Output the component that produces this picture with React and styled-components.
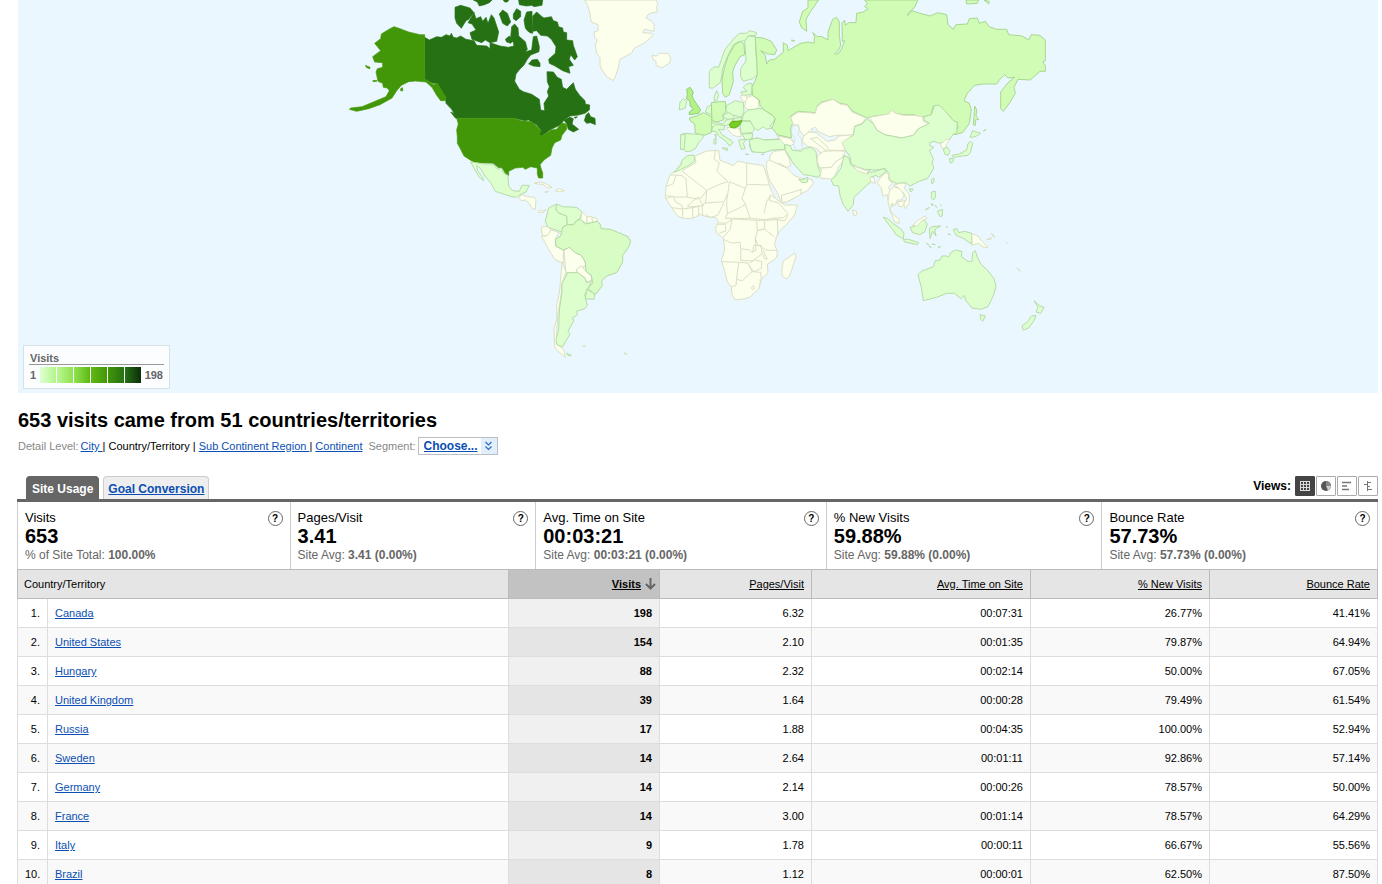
import React from 'react';
import styled, { createGlobalStyle } from 'styled-components';

const Global = createGlobalStyle`
  * { box-sizing: border-box; }
  body { margin: 0; background: #fff; color: #000; font-family: "Liberation Sans", Arial, sans-serif; font-size: 11px; }
`;

const Page = styled.main`
  padding: 0 4px 0 17px;
`;
const MapPanel = styled.section`
  position: relative;
  margin-left: 1px;
  height: 393px;
  background: #eaf7fe;
  overflow: hidden;
`;
const MapSvg = styled.svg`
  display: block;
  width: 100%;
  height: 100%;
`;
const Legend = styled.div`
  position: absolute;
  left: 5px;
  bottom: 4px;
  width: 147px;
  height: 44px;
  padding: 6px 5px 0;
  border: 1px solid #d8e1e4;
  background: #fbfdff;
  color: #666;
  font-weight: bold;
`;
const LegendTitle = styled.div`
  height: 13px;
  padding-left: 1px;
  line-height: 13px;
  border-bottom: 1px solid #999;
`;
const LegendScale = styled.div`
  display: flex;
  align-items: center;
  justify-content: space-between;
  height: 20px;
  padding: 0 1px;
`;
const Ramp = styled.div`
  display: flex;
  gap: 1px;
`;
const Step = styled.span`
  width: 16px;
  height: 16px;
  background: linear-gradient(to right, ${p => p.$from}, ${p => p.$to});
`;

const Title = styled.h1`
  margin: 15px 0 0 1px;
  font-size: 20px;
  line-height: 24px;
`;
const DetailBar = styled.div`
  display: flex;
  align-items: center;
  height: 20px;
  margin: 4px 0 0 1px;
  color: #888;
`;
const Levels = styled.nav`
  margin: 0 6px 0 2px;
  color: #000;
`;
const Link = styled.a`
  color: #0b4fb3;
  text-decoration: underline;
`;
const SegmentBox = styled.span`
  position: relative;
  display: flex;
  margin-left: 2px;
  border: 1px solid #b9bfc4;
  width: 80px;
  height: 18px;
  background: linear-gradient(to right, #fff 62px, #e2effa 62px);
`;
const SegmentSelect = styled.select`
  appearance: none;
  width: 100%;
  padding: 0 0 0 5px;
  border: 0;
  background: transparent;
  color: #0b4fb3;
  font: bold 12px "Liberation Sans", Arial, sans-serif;
  text-decoration: underline;
`;
const SegmentArrow = styled.svg`
  position: absolute;
  right: 4px;
  top: 3px;
  pointer-events: none;
`;

const TabBar = styled.div`
  display: flex;
  align-items: flex-end;
  justify-content: space-between;
  height: 46px;
  border-bottom: 3px solid #666;
`;
const Tabs = styled.div`
  display: flex;
  gap: 4px;
  padding-left: 9px;
`;
const Tab = styled.button`
  height: 23px;
  padding: 2px ${p => (p.$active ? 5 : 4)}px 0;
  border: 1px solid ${p => (p.$active ? '#666' : '#ccc')};
  border-bottom: 0;
  border-radius: 4px 4px 0 0;
  background: ${p => (p.$active ? '#666' : '#eee')};
  color: ${p => (p.$active ? '#fff' : '#0b4fb3')};
  font: bold 12px "Liberation Sans", Arial, sans-serif;
  text-decoration: ${p => (p.$active ? 'none' : 'underline')};
`;
const Views = styled.div`
  display: flex;
  align-items: center;
  gap: 1px;
  height: 20px;
  margin-bottom: 3px;
  font-size: 12px;
  font-weight: bold;
`;
const ViewsLabel = styled.span`
  margin-right: 3px;
`;
const ViewButton = styled.button`
  display: grid;
  place-items: center;
  width: 20px;
  height: 20px;
  padding: 0;
  border: 1px solid ${p => (p.$active ? '#444' : '#aaa')};
  border-radius: 1px;
  background: ${p => (p.$active ? '#444' : '#fff')};
`;

const Summary = styled.section`
  display: grid;
  grid-template-columns: 272fr 246fr 291fr 276fr 276fr;
  border: solid #ccc;
  border-width: 0 1px 0 1px;
`;
const Metric = styled.div`
  position: relative;
  height: 67px;
  padding: 7px 7px 0;
  color: #666;
  font-size: 12px;
  line-height: 20px;
  & + & { border-left: 1px solid #ccc; }
`;
const MetricName = styled.div`
  color: #000;
  font-size: 13px;
  line-height: 18px;
`;
const MetricValue = styled.div`
  color: #000;
  font-size: 20px;
  font-weight: bold;
  line-height: 18px;
`;
const Help = styled.button`
  position: absolute;
  top: 9px;
  right: 7px;
  width: 15px;
  height: 15px;
  padding: 0;
  border: 1px solid #666;
  border-radius: 50%;
  background: #fff;
  color: #000;
  font: bold 10px/13px "Liberation Sans", Arial, sans-serif;
`;

const Table = styled.table`
  width: 100%;
  table-layout: fixed;
  border-collapse: collapse;
  font-size: 11px;
`;
const Col = styled.col`
  width: ${p => p.$w};
`;
const Th = styled.th`
  height: 29px;
  padding: 0 7px;
  border: 1px solid #bbb;
  background: ${p => (p.$sorted ? '#c2c2c2' : '#e5e5e5')};
  font-weight: ${p => (p.$sorted ? 'bold' : 'normal')};
  text-align: ${p => (p.$left ? 'left' : 'right')};
  ${p => p.$left && 'padding-left: 6px;'}
  ${p => p.$sorted && 'padding-right: 3px;'}
`;
const SortButton = styled.button`
  display: inline-flex;
  align-items: center;
  gap: 4px;
  padding: 0;
  border: 0;
  background: none;
  color: #000;
  font: inherit;
  text-decoration: underline;
`;
const Row = styled.tr`
  background: ${p => (p.$even ? '#f9f9f9' : '#fff')};
`;
const Td = styled.td`
  height: 29px;
  padding: 0 7px;
  border: 1px solid #ddd;
  text-align: ${p => (p.$left ? 'left' : 'right')};
  ${p => p.$strong && `font-weight: bold; background: ${p.$even ? '#e5e5e5' : '#f0f0f0'};`}
`;

const FILLS = {
  none: ['#fbffeb', '#dcdfc6'],
  low: ['#dcffcd', '#b6dba8'],
  br: ['#d8fdc4', '#b2d8a0'],
  mid: ['#d0fcb6', '#a9d693'],
  uk: ['#b4f189', '#91cf6c'],
  hu: ['#78cf23', '#62b015'],
  us: ['#429708', '#429708'],
  ca: ['#267114', '#267114'],
};

// Each sheet is a patch of the map, digitised at three times its drawn size.
const SHEETS = [
  { at: [340, 0], shapes: [
    ['ca', '254,112 268,120 290,110 305,112 318,104 330,108 334,100 340,112 350,114 362,108 378,118 402,122 410,136 440,138 450,146 450,128 462,132 480,138 505,142 522,138 520,128 512,112 515,80 524,72 534,84 536,108 556,125 562,148 556,155 575,150 580,110 590,108 598,140 597,155 572,165 562,178 552,195 540,207 528,222 524,244 538,268 550,275 575,283 598,298 602,330 614,332 612,310 626,288 622,275 628,260 622,245 621,215 640,216 652,232 664,238 668,262 680,268 700,248 706,268 718,285 735,302 736,312 749,315 748,330 735,340 715,345 690,348 675,358 660,375 630,390 610,405 598,410 597,398 602,390 590,375 565,360 555,362 520,354 355,354 345,346 335,328 318,310 316,292 292,250 278,250 254,238'],
    ['ca', '672,360 690,352 700,356 696,372 716,388 700,396 685,388 680,372'],
    ['ca', '733,362 738,345 746,338 752,350 765,355 766,374 752,368 740,370'],
    ['ca', '345,22 362,16 390,24 402,38 386,58 378,62 364,85 350,70 345,54'],
    ['ca', '384,68 402,38 408,56 422,50 428,64 438,52 444,70 454,44 462,54 468,72 476,96 470,124 450,128 436,120 425,128 396,118 390,98 408,90 396,72'],
    ['ca', '478,42 488,30 502,40 512,66 502,78 488,70'],
    ['ca', '520,42 530,26 542,34 542,50 528,62 520,56'],
    ['ca', '496,118 508,108 519,122 512,130 500,126'],
    ['ca', '552,60 560,36 576,34 576,56 578,100 570,98 562,92 556,84'],
    ['ca', '578,48 590,36 606,50 612,54 634,50 640,62 652,66 656,80 668,84 670,96 680,98 680,120 698,122 700,136 712,170 704,180 692,164 688,178 700,196 686,200 690,220 668,212 645,198 628,190 626,178 646,160 648,140 634,118 622,108 602,106 590,92 578,94'],
    ['ca', '400,0 412,6 418,18 434,14 448,8 456,0'],
    ['ca', '536,0 538,14 560,18 576,16 582,20 606,16 608,0'],
    ['ca', '490,0 494,6 502,6 506,0'],
    ['ca', '566,192 576,180 592,178 600,190 600,200 580,198'],
    ['ca', '332,336 340,340 356,356 346,354'],
    ['ca', '702,352 712,350 708,355'],
    ['us', '254,104 254,238 264,242 280,254 292,250 308,276 318,292 314,302 302,302 290,286 276,262 258,246 226,243 206,245 184,256 170,272 156,294 120,314 86,326 50,334 28,328 32,324 66,320 100,306 138,290 148,272 142,264 130,262 128,250 114,244 108,216 112,206 128,202 128,188 104,186 98,170 122,152 104,130 122,116 124,102 150,86 162,80 180,86 206,96 240,104'],
    ['us', '76,196 90,202 90,206 80,203'], ['us', '98,242 110,241 110,244 100,245'], ['us', '182,266 188,263 188,273 182,272'],
    ['us', '350,355 520,355 544,362 560,364 576,366 592,380 602,392 598,408 616,402 634,390 650,388 664,370 672,370 680,374 680,388 666,406 662,420 644,428 636,444 632,466 612,480 600,494 604,508 608,518 608,534 596,534 592,522 592,504 572,500 556,508 548,502 526,504 506,514 506,526 496,520 488,506 474,502 460,490 408,488 394,482 372,468 360,444 352,430 352,410 350,390 355,372'],
  ] },
  { at: [440, 150], shapes: [
    ['low', '92,36 108,38 130,42 156,42 174,58 184,54 190,68 204,78 206,108 218,122 238,124 246,106 268,106 258,126 240,134 230,142 214,140 166,124 152,98 134,78 122,56 110,46 112,60 126,80 132,92 118,82 106,62'],
    ['none', '236,142 246,134 262,140 284,142 288,148 286,178 276,176 268,160 256,150 244,152'],
    ['none', '294,184 302,180 308,184 318,178 312,186 298,188'],
    ['none', '282,100 296,96 316,100 336,112 324,114 310,104'], ['none', '346,122 356,116 374,122 360,126'], ['none', '314,126 326,124 322,128'],
    ['low', '316,214 326,174 350,162 348,180 358,190 380,198 382,224 368,232 368,248 354,242 324,232'],
    ['low', '350,162 368,170 410,172 426,186 420,206 410,212 400,224 382,224 380,198 354,188 348,176'],
    ['none', '426,186 440,198 442,222 422,210'], ['none', '440,200 456,200 458,218 442,220'], ['none', '456,202 470,204 472,214 458,218'],
    ['none', '306,230 322,230 334,240 320,258 308,256 304,244'],
    ['none', '304,258 320,258 334,240 358,248 346,266 346,288 370,300 370,340 344,328 324,294'],
    ['none', '372,300 388,292 406,308 424,316 436,336 436,348 410,358 408,368 378,370'],
    ['none', '410,358 424,348 436,362 454,378 454,394 440,396 434,382 412,368'],
    ['none', '366,338 378,366 364,406 364,430 354,490 350,540 350,580 372,600 376,622 350,600 344,590 342,536 350,508 350,464 358,430'],
    ['low', '382,368 414,368 434,384 440,398 454,392 450,404 434,434 442,466 434,476 410,484 412,494 396,506 402,510 384,544 390,552 368,590 350,584 348,568 356,540 358,480 366,424 366,400 378,380'],
    ['br', '368,232 382,224 400,224 410,212 422,208 436,222 472,214 480,222 484,236 512,238 536,248 564,260 572,274 566,292 548,316 548,336 530,368 500,378 486,392 486,408 466,434 444,416 458,398 454,376 438,364 436,336 424,316 406,308 388,292 370,300 348,288 346,268 362,258'],
    ['low', '440,418 464,432 462,448 436,446'],
    ['low', '380,610 394,616 386,618'], ['none', '428,588 438,588 432,590'], ['none', '552,608 562,612 556,614'],
  ] },
  { at: [570, 0], shapes: [
    ['none', '44,0 54,18 60,44 64,66 84,74 84,92 72,96 74,112 82,120 76,136 80,160 90,172 90,196 96,210 110,230 130,242 136,230 144,206 150,178 184,160 194,144 222,130 250,106 246,100 218,98 224,88 252,94 252,72 240,60 228,54 234,44 246,38 262,36 260,20 264,14 258,0'],
    ['none', '246,166 260,168 268,160 294,160 302,174 300,188 276,204 258,196 258,184 250,178'],
    ['low', '418,264 418,214 432,200 446,202 464,150 490,118 508,100 528,100 540,92 560,98 556,108 540,106 524,122 504,126 490,134 472,170 458,206 452,246 430,264'],
    ['mid', '458,280 456,240 464,200 474,170 494,134 512,124 522,132 524,164 510,170 494,198 488,216 490,244 478,284 466,292'],
    ['low', '524,126 534,108 556,110 558,160 562,196 562,224 548,236 520,244 512,230 512,206 528,182 526,148'],
    ['low', '432,292 440,272 446,284 440,302 434,304'],
    ['low', '520,262 530,252 546,250 546,266 544,284 520,286 512,276 530,274'],
    ['none', '512,286 530,288 536,306 524,306 514,298'],
    ['none', '524,316 530,294 548,286 566,300 566,324 544,332 528,326'],
    ['uk', '350,268 360,262 370,276 366,288 372,300 384,318 392,330 386,340 358,344 358,336 370,326 360,318 360,304 350,296 352,284'],
    ['low', '328,330 330,306 340,296 350,302 346,324'],
    ['mid', '358,354 380,348 400,338 424,350 426,372 424,398 402,406 376,400 374,372 360,362'],
    ['low', '332,404 344,400 396,404 400,412 386,428 376,446 360,454 346,454 342,448 332,448'],
    ['low', '332,404 346,404 342,448 332,448'],
    ['low', '406,336 412,320 426,314 424,344'],
    ['mid', '424,308 440,306 466,304 468,336 458,344 460,360 442,366 426,362'],
    ['low', '470,316 496,302 520,308 522,336 514,352 484,344 468,334'],
    ['low', '460,346 476,338 494,348 484,358 464,356'],
    ['low', '424,370 440,368 458,372 468,360 488,356 486,368 470,376 448,378 426,382'],
    ['low', '426,384 436,374 464,376 462,390 446,388 456,404 484,422 490,428 478,438 468,424 446,408 438,394 426,394'],
    ['low', '490,356 514,352 512,364 494,364'],
    ['none', '470,382 494,384 508,384 514,410 502,410 488,404 474,390'],
    ['low', '514,364 540,364 552,380 552,392 546,398 514,400 510,380'],
    ['low', '516,402 548,400 546,416 526,420'],
    ['low', '506,420 528,418 520,430 526,446 514,448 510,436'],
    ['low', '520,344 534,330 564,326 578,326 614,350 614,360 600,378 606,384 590,388 580,380 562,392 550,380 540,362 516,362'],
    ['hu', '478,374 486,364 500,364 516,362 506,378 494,384 482,382'],
    ['low', '456,444 472,444 472,452'], ['low', '432,418 438,414 438,432 432,432'], ['low', '434,404 438,402 438,412'],
    ['low', '540,418 560,414 580,420 636,416 644,436 640,448 604,450 576,456 546,456 538,436'],
    ['none', '620,406 650,412 672,422 674,430 654,436 636,416'],
    ['mid', '664,120 674,122 668,124'], ['low', '526,462 536,464'], ['low', '574,464 582,462'],
  ] },
  { at: [740, 0], shapes: [
    ['mid', '200,94 184,82 178,66 188,34 204,24 204,0 236,0 212,34 198,58'],
    ['mid', '46,112 70,114 94,124 110,150 104,164 82,162 62,152 76,166 80,192 88,180 104,178 130,156 130,128 142,136 144,152 182,130 204,126 222,130 224,110 218,98 232,110 246,110 264,120 264,96 278,58 290,52 298,66 298,104 302,136 296,150 284,162 294,162 304,148 314,122 307,124 306,70 314,60 316,76 326,68 348,68 350,40 370,36 384,26 374,20 382,10 374,0 534,0 524,22 502,42 504,46 516,32 540,40 570,48 594,38 620,44 624,74 640,88 648,74 682,72 688,56 712,54 718,70 736,64 748,80 770,88 800,88 806,104 846,108 866,120 874,104 900,106 916,120 916,182 908,186 916,196 916,214 900,214 870,240 834,238 822,262 826,280 808,310 790,334 782,326 782,276 804,248 824,232 804,234 794,224 778,240 770,252 730,252 704,256 682,280 672,302 688,310 694,330 688,370 668,398 644,404 638,398 654,386 652,366 642,364 614,332 598,316 580,318 572,346 540,352 522,344 490,344 464,340 454,330 446,342 394,350 382,354 356,342 336,332 322,314 300,310 280,298 244,306 230,320 228,338 174,334 152,348 158,370 152,384 154,414 112,404 96,384 106,358 98,346 70,328 60,316 58,300 38,286 36,262 46,240 52,224 50,180'],
    ['mid', '678,0 680,12 712,10 716,0'], ['mid', '732,0 746,12 748,4'],
    ['none', '152,352 174,336 226,340 230,322 246,308 280,298 300,312 322,316 336,336 360,346 378,354 366,370 344,378 340,404 324,406 290,406 268,410 246,400 228,392 228,384 214,388 206,396 192,408 178,390 176,376 160,374'],
    ['none', '388,352 446,342 454,330 466,340 490,346 522,346 548,350 550,364 568,370 532,388 520,406 486,414 456,408 434,404 410,390 402,374'],
    ['low', '28,424 34,418 54,414 74,420 130,418 134,436 134,448 98,450 72,458 44,456 34,452'],
    ['none', '112,408 130,412 152,416 162,430 152,438 134,434'],
    ['mid', '704,318 710,330 708,348 716,358 706,360 706,376 700,374 702,346'],
    ['low', '690,412 698,392 722,400 706,410'], ['low', '730,392 738,388 732,394'],
    ['low', '636,466 658,462 680,450 684,430 692,424 698,430 692,456 684,466 666,468 642,472'],
    ['low', '628,480 630,474 640,480'],
  ] },
  { at: [740, 100], shapes: [
    ['low', '382,56 366,72 344,80 340,106 312,122 304,130 316,150 330,170 334,192 350,200 374,208 408,210 436,206 446,220 448,240 468,250 498,248 510,258 538,244 562,236 582,204 576,190 580,176 568,152 582,142 570,138 570,128 582,124 598,130 628,120 640,102 650,98 652,68 638,60 618,36 598,16 584,16 574,44 552,50 552,60 568,70 536,86 520,106 484,114 434,104 410,90 402,74'],
    ['none', '604,130 616,120 630,116 618,136 620,142 606,146 602,136'],
    ['low', '610,148 622,142 630,154 624,166 614,162'],
    ['low', '628,178 640,174 640,184 632,190'],
    ['none', '190,110 206,96 228,98 262,124 286,120 296,108 340,104 306,128 316,150 300,152 268,150 264,162 238,156 232,146 200,138 186,124'],
    ['none', '212,116 232,112 266,144 258,152'],
    ['low', '134,134 150,136 156,150 184,154 190,146 212,142 228,154 232,194 242,220 234,232 208,226 190,224 174,206 158,188 146,166 136,150'],
    ['none', '232,168 250,154 288,152 316,154 306,174 288,184 274,202 240,204 232,186'],
    ['none', '244,204 274,202 288,184 306,174 316,166 310,184 296,200 280,238 240,234'],
    ['low', '312,168 326,172 332,194 350,208 384,222 388,210 392,218 432,206 438,214 416,232 408,226 392,232 394,244 380,256 342,292 340,314 324,334 310,314 300,286 296,258 280,256 274,240 290,224 304,202'],
    ['none', '340,198 352,202 384,214 380,222 352,212'],
    ['none', '390,230 402,234 406,250 392,246'],
    ['none', '338,330 350,334 350,344 342,348'],
    ['none', '420,234 436,218 446,222 446,238 456,250 446,262 456,290 458,320 444,300 442,284 428,288 424,264 412,250'],
    ['none', '448,272 462,260 484,268 492,286 484,300 472,300 466,316 456,310 450,330 444,304'],
    ['none', '460,256 480,250 500,250 492,264 508,284 508,308 496,326 490,310 500,298 492,280 474,262'],
    ['none', '472,306 494,302 490,318 478,320'],
    ['none', '450,330 460,344 476,356 478,370 464,366'],
    ['low', '508,266 520,268 512,276'], ['low', '574,240 582,234 582,246 576,252'],
    ['low', '574,276 586,274 586,292 580,300 574,294'], ['low', '592,334 608,328 606,348 600,350'], ['low', '556,330 568,322 560,328'],
    ['low', '574,310 580,314 576,318'], ['low', '586,316 590,322'], ['low', '600,312 606,318'],
    ['none', '90,168 100,154 120,152 134,150 148,178 152,198 138,202 124,192 108,190 88,184'],
    ['none', '80,186 88,180 110,190 140,204 162,226 180,234 216,238 220,250 202,272 178,284 144,304 124,308 112,278 88,240 80,210'],
    ['low', '176,238 186,240 204,232 202,246 186,248'],
    ['none', '124,286 160,276 184,268 182,284 140,306 126,308'],
  ] },
  { at: [650, 135], shapes: [
    ['none', '138,62 170,48 206,46 210,76 232,84 250,92 264,78 290,84 340,92 350,122 362,162 376,190 392,202 404,210 442,210 434,240 414,264 388,288 380,304 374,326 382,352 380,368 352,388 354,414 334,432 326,462 300,486 282,492 254,494 246,478 244,456 232,440 220,394 214,378 224,342 220,310 200,294 196,280 206,260 198,248 166,244 152,238 128,250 98,250 82,242 56,204 46,188 48,154 60,120 78,106 90,88 110,70'],
    ['low', '72,112 92,92 96,76 112,62 132,60 134,78 118,90 92,104'],
    ['none', '396,400 400,378 424,362 434,354 438,366 432,384 418,424 408,432 396,422'],
  ] },
  { at: [840, 170], shapes: [
    ['low', '130,142 144,146 158,160 182,176 192,190 190,206 170,196 156,176'],
    ['low', '190,208 206,208 236,218 232,224 194,216'],
    ['low', '210,172 222,170 250,148 262,162 254,186 238,194 218,188'],
    ['none', '218,166 238,148 256,138 262,146 248,150 232,168'],
    ['low', '268,176 276,170 302,168 284,178 288,198 278,184 270,206'],
    ['low', '340,178 350,176 356,188 374,184 396,190 394,222 372,206 348,196'],
    ['none', '396,190 414,198 424,212 444,232 432,232 414,220 396,226'],
    ['none', '440,208 456,204 452,208'], ['none', '454,190 464,198 462,202'], ['none', '498,216 504,222'], ['none', '530,294 542,302 540,304'],
    ['low', '318,170 322,172'], ['low', '324,192 332,194'], ['low', '260,220 268,226'], ['low', '268,230 274,232'], ['low', '276,222 286,224'], ['low', '294,232 302,230'],
    ['low', '234,314 244,304 280,290 286,272 300,270 306,258 320,258 326,262 332,248 346,240 366,244 364,260 384,274 396,274 398,248 406,242 412,262 424,284 440,298 462,326 468,348 462,372 444,410 422,418 396,414 376,390 374,376 362,386 344,370 320,370 290,382 250,392 244,352'],
    ['low', '420,434 436,438 428,454 422,448'],
    ['low', '582,392 600,408 612,412 602,430 588,426 594,412'],
    ['low', '574,438 588,436 582,452 566,474 550,480 546,468 562,456'],
  ] },
];

// Borders inside Africa and the Near East, on the sheet at (650, 135).
const AFRICA_BORDERS = [
  '134,62 138,82 96,108 170,166 208,148 234,140 200,108 208,84 192,72 196,48',
  '290,84 290,148 358,150', '290,148 286,160 238,140 236,158 230,200 232,236 270,218 286,208 276,190 286,160',
  '78,120 96,122 108,132 112,186 76,186 50,182', '60,120 78,120 70,146 50,154',
  '112,186 130,190 154,188 170,166', '170,166 168,190 166,204 222,200 232,178', '48,190 70,184 76,200 96,212 98,222 64,218',
  '112,214 130,196 146,190 160,212 112,216', '98,248 98,222 128,218 128,250', '146,244 146,214 128,218', '158,242 156,210 166,204', '166,238 182,248 204,240 222,202',
  '286,208 300,250 348,254 366,250 404,258 414,240', '342,234 350,200 362,180 376,190', '362,180 358,196 386,204 414,236 400,248 366,250',
  '232,236 226,250 250,250 300,250', '206,264 230,264 246,252 240,284 220,308', '202,268 226,268 228,288 208,294',
  '250,252 320,256 322,290 316,310 318,346 306,352 296,344 272,342 270,322 244,324 222,314',
  '322,256 344,256 344,280 322,288', '346,256 382,254 384,302', '322,286 344,282 374,306', '316,310 324,330 348,346 382,346',
  '272,344 272,376 308,378 336,356 334,332 312,330 308,350', '214,380 270,382 294,384', '266,384 260,430 258,452 244,454',
  '260,432 276,438 306,410 294,384', '300,384 312,374 336,380 334,400 312,410 296,390', '306,410 332,412 334,436', '340,348 352,372 344,372 338,356',
  '304,458 310,452 314,460 308,464 304,458', '328,434 334,440 328,446',
];

function WorldMap() {
  return (
    <MapSvg viewBox="18 0 1360 393" preserveAspectRatio="xMidYMid slice" role="img" aria-label="Visits by country">
      {SHEETS.map(sheet => (
        <g key={sheet.at.join()} transform={`translate(${sheet.at[0]} ${sheet.at[1]}) scale(${1 / 3})`} strokeLinejoin="round">
          {sheet.shapes.map(([tone, points]) => (
            <polygon key={points} points={points} fill={FILLS[tone][0]} stroke={FILLS[tone][1]} strokeWidth={tone === 'us' || tone === 'ca' ? 2 : 3} />
          ))}
        </g>
      ))}
      <g transform={`translate(650 135) scale(${1 / 3})`} fill="none" stroke="#dcdfc6" strokeWidth="3" strokeLinejoin="round">
        {AFRICA_BORDERS.map(points => <polyline key={points} points={points} />)}
      </g>
      <g transform={`translate(740 0) scale(${1 / 3})`} fill="#eaf7fe" stroke="#cfdccb" strokeWidth="2" strokeLinejoin="round">
        <polygon points="156,380 172,374 178,388 174,404 184,416 188,448 168,450 160,432 166,418 154,398" />
        <polygon points="214,386 226,382 232,390 222,398" />
      </g>
    </MapSvg>
  );
}

const RAMP = [['#e0ffd4', '#b4f58a'], ['#baf792', '#8fe34f'], ['#8fe34f', '#5db812'], ['#62b915', '#429708'], ['#429708', '#267114'], ['#267114', '#0c2c08']];

const METRICS = [
  ['Visits', '653', '% of Site Total: ', '100.00%'],
  ['Pages/Visit', '3.41', 'Site Avg: ', '3.41 (0.00%)'],
  ['Avg. Time on Site', '00:03:21', 'Site Avg: ', '00:03:21 (0.00%)'],
  ['% New Visits', '59.88%', 'Site Avg: ', '59.88% (0.00%)'],
  ['Bounce Rate', '57.73%', 'Site Avg: ', '57.73% (0.00%)'],
];

const ROWS = [
  ['Canada', '198', '6.32', '00:07:31', '26.77%', '41.41%'],
  ['United States', '154', '2.10', '00:01:35', '79.87%', '64.94%'],
  ['Hungary', '88', '2.32', '00:02:14', '50.00%', '67.05%'],
  ['United Kingdom', '39', '1.64', '00:00:28', '79.49%', '61.54%'],
  ['Russia', '17', '1.88', '00:04:35', '100.00%', '52.94%'],
  ['Sweden', '14', '2.64', '00:01:11', '92.86%', '57.14%'],
  ['Germany', '14', '2.14', '00:00:26', '78.57%', '50.00%'],
  ['France', '14', '3.00', '00:01:14', '78.57%', '64.29%'],
  ['Italy', '9', '1.78', '00:00:11', '66.67%', '55.56%'],
  ['Brazil', '8', '1.12', '00:00:01', '62.50%', '87.50%'],
];

export default function App() {
  return (
    <>
      <Global />
      <Page>
        <MapPanel>
          <WorldMap />
          <Legend>
            <LegendTitle>Visits</LegendTitle>
            <LegendScale>
              <span>1</span>
              <Ramp>{RAMP.map(([from, to]) => <Step key={from} $from={from} $to={to} />)}</Ramp>
              <span>198</span>
            </LegendScale>
          </Legend>
        </MapPanel>

        <Title>653 visits came from 51 countries/territories</Title>
        <DetailBar>
          Detail Level:
          <Levels>
            <Link href="#city">City </Link>| Country/Territory | <Link href="#region">Sub Continent Region </Link>| <Link href="#continent">Continent</Link>
          </Levels>
          <label htmlFor="segment">Segment:</label>
          <SegmentBox>
            <SegmentSelect id="segment"><option>Choose...</option></SegmentSelect>
            <SegmentArrow width="9" height="10" viewBox="0 0 9 10" fill="none" stroke="#2a6cc0" strokeWidth="1.2">
              <path d="M1.5 1 4.5 4 7.5 1M1.5 5.5 4.5 8.500 7.500 5.500" />
            </SegmentArrow>
          </SegmentBox>
        </DetailBar>

        <TabBar>
          <Tabs>
            <Tab $active>Site Usage</Tab>
            <Tab>Goal Conversion</Tab>
          </Tabs>
          <Views>
            <ViewsLabel>Views:</ViewsLabel>
            <ViewButton $active aria-label="Table">
              <svg width="10" height="10" viewBox="0 0 10 10"><path d="M0 .5H10M0 3.500H10M0 6.500H10M0 9.500H10M.5 0V10M3.500 0V10M6.500 0V10M9.500 0V10" stroke="#ddd" fill="none" /></svg>
            </ViewButton>
            <ViewButton aria-label="Pie chart">
              <svg width="10" height="10" viewBox="0 0 10 10"><circle cx="5" cy="5" r="5" fill="#555" /><path d="M5 5V0A5 5 0 0 1 10 5Z" fill="#888" /><path d="M5 5H10A5 5 0 0 1 7 9.600Z" fill="#ccc" /></svg>
            </ViewButton>
            <ViewButton aria-label="Bar chart">
              <svg width="10" height="10" viewBox="0 0 10 10"><path d="M0 1.500H9M0 5H5M0 8.500H7" stroke="#777" strokeWidth="1.500" /></svg>
            </ViewButton>
            <ViewButton aria-label="Comparison">
              <svg width="10" height="10" viewBox="0 0 10 10"><path d="M4.500 0V10M4.500 1.500H8M1 3.500H4.500M4.500 5.500H7M4.500 8.500H9" stroke="#777" fill="none" /></svg>
            </ViewButton>
          </Views>
        </TabBar>

        <Summary>
          {METRICS.map(([name, value, note, amount]) => (
            <Metric key={name}>
              <MetricName>{name}</MetricName>
              <MetricValue>{value}</MetricValue>
              {note}<b>{amount}</b>
              <Help aria-label={`About ${name}`}>?</Help>
            </Metric>
          ))}
        </Summary>

        <Table>
          <colgroup>
            <Col $w="30px" /><Col $w="auto" /><Col $w="151px" /><Col $w="152px" /><Col $w="219px" /><Col $w="179px" /><Col $w="168px" />
          </colgroup>
          <thead>
            <tr>
              <Th colSpan={2} $left>Country/Territory</Th>
              <Th $sorted aria-sort="descending">
                <SortButton>
                  Visits
                  <svg width="11" height="12" viewBox="0 0 11 12" fill="none" stroke="#666" strokeWidth="2"><path d="M5.500 0V11M1 6 5.500 10.500 10 6" /></svg>
                </SortButton>
              </Th>
              {['Pages/Visit', 'Avg. Time on Site', '% New Visits', 'Bounce Rate'].map(name => (
                <Th key={name}><SortButton>{name}</SortButton></Th>
              ))}
            </tr>
          </thead>
          <tbody>
            {ROWS.map(([country, visits, ...rest], i) => (
              <Row key={country} $even={i % 2 === 1}>
                <Td>{i + 1}.</Td>
                <Td $left><Link href={`#${country}`}>{country}</Link></Td>
                <Td $strong $even={i % 2 === 1}>{visits}</Td>
                {rest.map((value, k) => <Td key={k}>{value}</Td>)}
              </Row>
            ))}
          </tbody>
        </Table>
      </Page>
    </>
  );
}
